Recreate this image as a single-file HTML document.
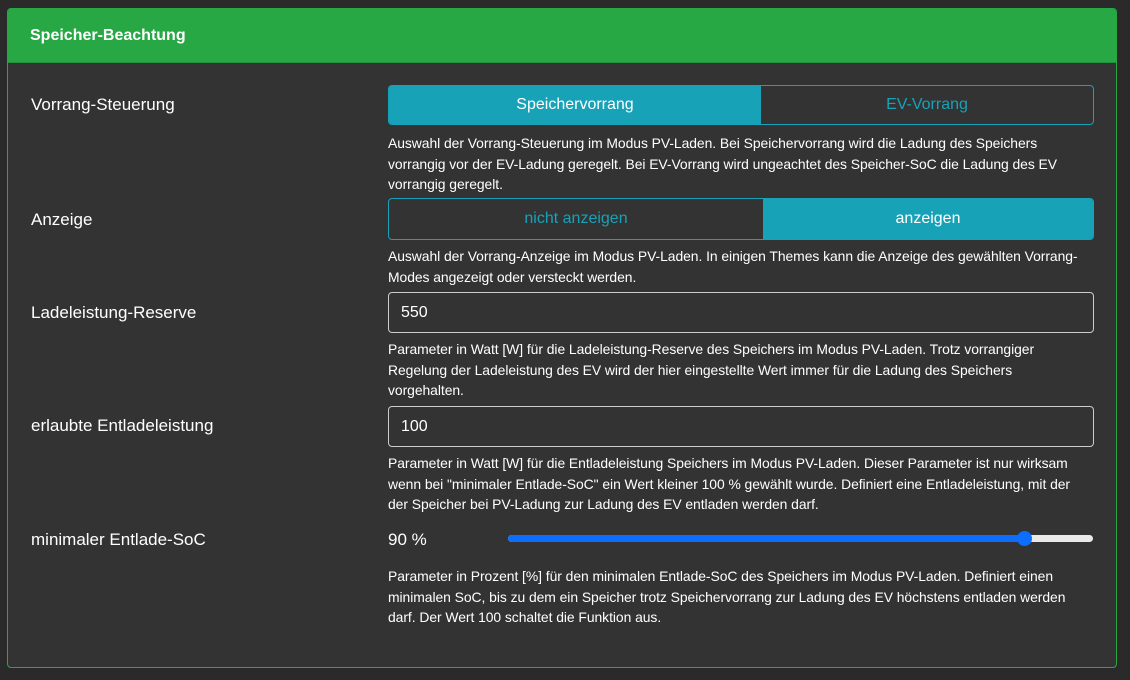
<!DOCTYPE html>
<html><head><meta charset="utf-8"><style>
body{margin:0;background:#2a2a2a;font-family:"Liberation Sans",sans-serif;width:1130px;height:680px;overflow:hidden;color:#fff}
.card{position:absolute;left:7px;top:8px;width:1108px;height:658px;border:1px solid #28a745;border-radius:4px;background:#333;overflow:hidden}
.hd{height:53px;background:#28a745;border-bottom:1px solid #23913d;font-weight:bold;font-size:16px;line-height:53px;padding-left:22px}
.lbl{position:absolute;left:23px;font-size:17px}
.ctl{position:absolute;left:380px;width:706px}
.bg{display:flex;height:40px;border:1px solid #17a2b8;border-radius:4px;overflow:hidden;box-sizing:border-box}
.bg div{text-align:center;line-height:38px;font-size:16px;color:#17a2b8}
.bg .on{background:#17a2b8;color:#fff}
.inp{height:41px;box-sizing:border-box;border:1px solid #ccc;border-radius:4px;background:#333;font-size:16px;line-height:39px;padding-left:12px}
.hp{position:absolute;left:380px;width:706px;font-size:13.9px;line-height:20.7px;color:#fff;letter-spacing:-0.05px}
</style></head><body>
<div class="card">
<div class="hd">Speicher-Beachtung</div>
<div class="lbl" style="top:86px">Vorrang-Steuerung</div>
<div class="ctl" style="top:76px"><div class="bg"><div class="on" style="width:372px">Speichervorrang</div><div style="flex:1">EV-Vorrang</div></div></div>
<div class="hp" style="top:124px">Auswahl der Vorrang-Steuerung im Modus PV-Laden. Bei Speichervorrang wird die Ladung des Speichers vorrangig vor der EV-Ladung geregelt. Bei EV-Vorrang wird ungeachtet des Speicher-SoC die Ladung des EV vorrangig geregelt.</div>
<div class="lbl" style="top:201px">Anzeige</div>
<div class="ctl" style="top:189px"><div class="bg" style="height:42px"><div style="line-height:40px;width:374px">nicht anzeigen</div><div class="on" style="line-height:40px;flex:1">anzeigen</div></div></div>
<div class="hp" style="top:237px">Auswahl der Vorrang-Anzeige im Modus PV-Laden. In einigen Themes kann die Anzeige des gewählten Vorrang-Modes angezeigt oder versteckt werden.</div>
<div class="lbl" style="top:294px">Ladeleistung-Reserve</div>
<div class="ctl" style="top:283px"><div class="inp">550</div></div>
<div class="hp" style="top:330px">Parameter in Watt [W] für die Ladeleistung-Reserve des Speichers im Modus PV-Laden. Trotz vorrangiger Regelung der Ladeleistung des EV wird der hier eingestellte Wert immer für die Ladung des Speichers<br>vorgehalten.</div>
<div class="lbl" style="top:407px">erlaubte Entladeleistung</div>
<div class="ctl" style="top:397px"><div class="inp">100</div></div>
<div class="hp" style="top:444px">Parameter in Watt [W] für die Entladeleistung Speichers im Modus PV-Laden. Dieser Parameter ist nur wirksam wenn bei "minimaler Entlade-SoC" ein Wert kleiner 100 % gewählt wurde. Definiert eine Entladeleistung, mit der<br>der Speicher bei PV-Ladung zur Ladung des EV entladen werden darf.</div>
<div class="lbl" style="top:521px">minimaler Entlade-SoC</div>
<div style="position:absolute;left:380px;top:521px;font-size:17px">90 %</div>
<div style="position:absolute;left:500px;top:526px;width:585px;height:7px;border-radius:4px;background:#e9e9e9"></div>
<div style="position:absolute;left:500px;top:526px;width:518px;height:7px;border-radius:4px;background:#0d6efd"></div>
<div style="position:absolute;left:1009px;top:522px;width:15px;height:15px;border-radius:50%;background:#0d6efd"></div>
<div class="hp" style="top:557px">Parameter in Prozent [%] für den minimalen Entlade-SoC des Speichers im Modus PV-Laden. Definiert einen minimalen SoC, bis zu dem ein Speicher trotz Speichervorrang zur Ladung des EV höchstens entladen werden darf. Der Wert 100 schaltet die Funktion aus.</div>
</div>
</body></html>
